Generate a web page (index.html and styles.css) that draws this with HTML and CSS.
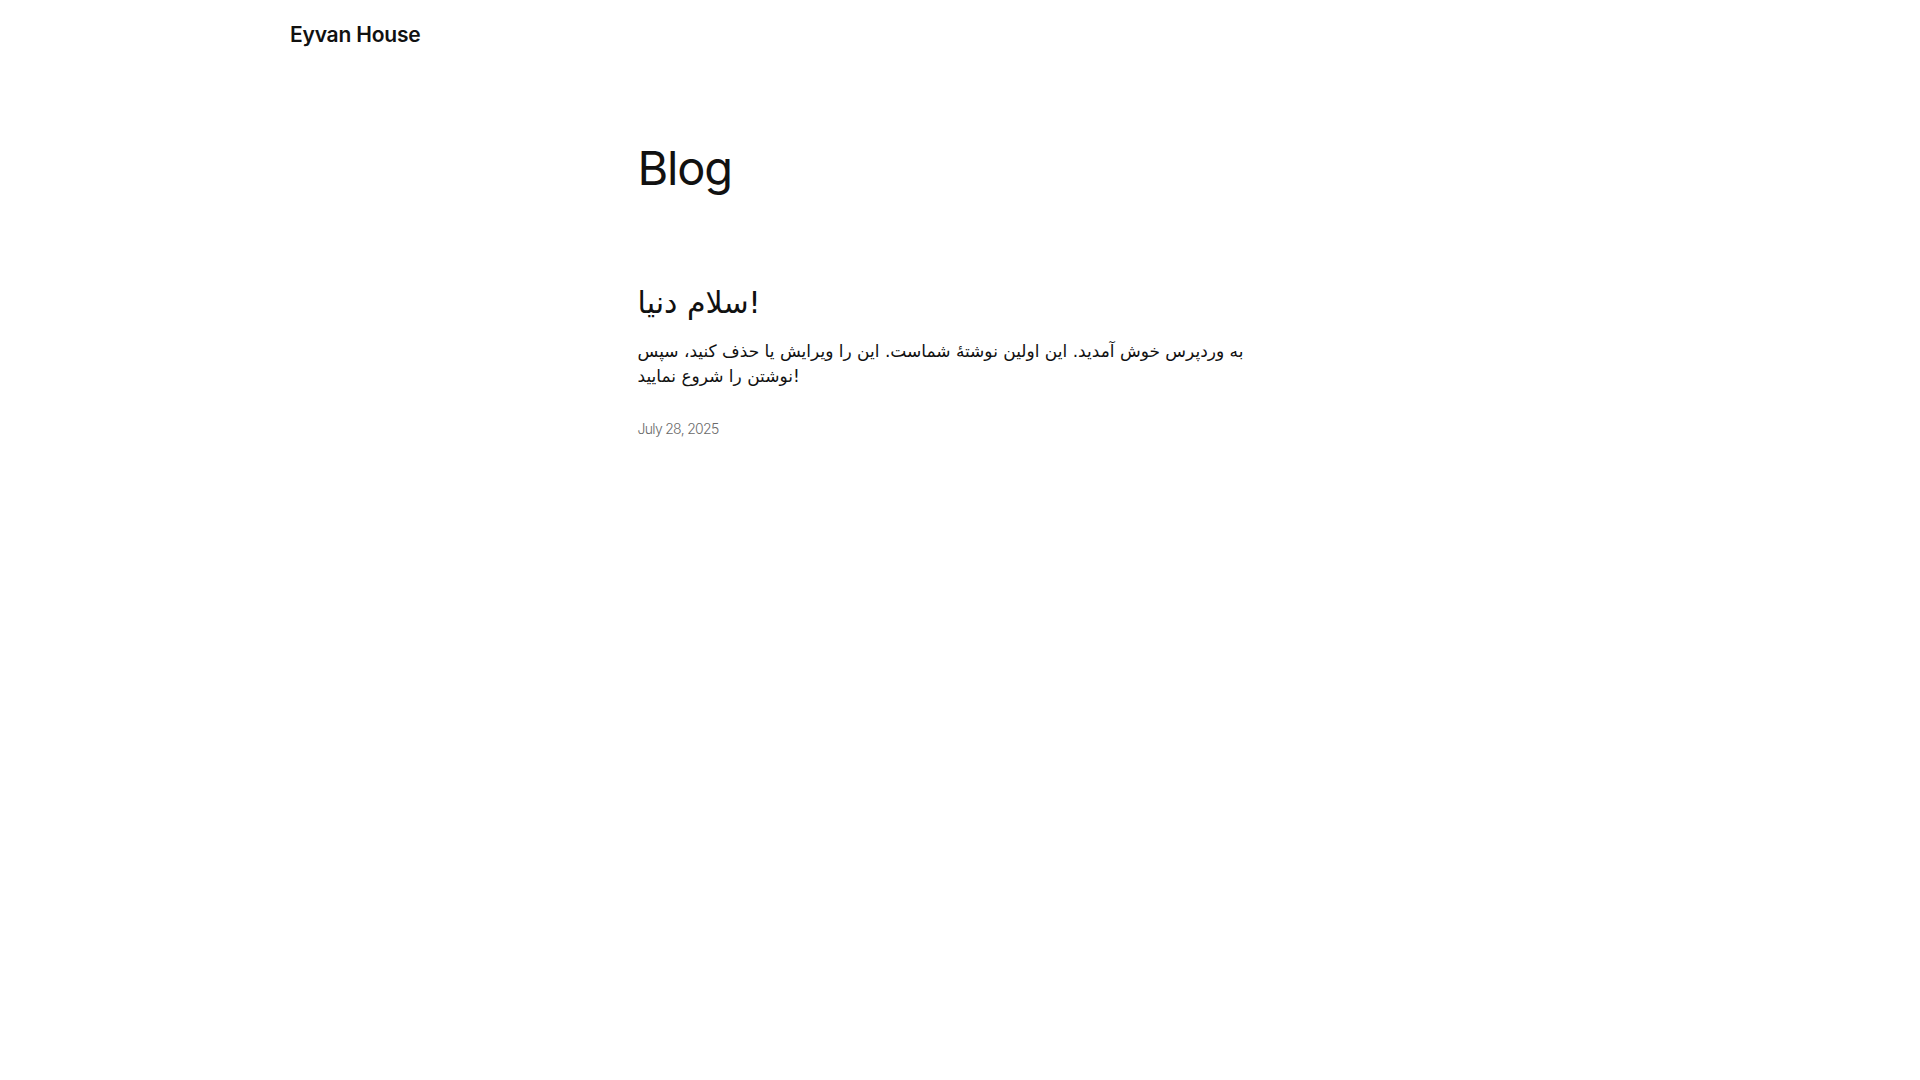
FILE: index.html
```html
<!DOCTYPE html>
<html lang="fa">
<head>
<meta charset="utf-8">
<title>Blog – Eyvan House</title>
<link rel="stylesheet" href="styles.css">
</head>
<body>
<header class="site-header">
  <div class="wide">
    <a class="site-title" href="#">Eyvan House</a>
  </div>
</header>
<main class="content">
  <h1 class="page-title">Blog</h1>
  <article class="post">
    <h2 class="post-title" dir="ltr">سلام دنیا!</h2>
    <p class="post-excerpt" dir="ltr">به وردپرس خوش آمدید. این اولین نوشتهٔ شماست. این را ویرایش یا حذف کنید، سپس نوشتن را شروع نمایید!</p>
    <div class="post-date">July 28, 2025</div>
  </article>
</main>
</body>
</html>
```

FILE: styles.css
```css
html, body {
  margin: 0;
  padding: 0;
  background: #ffffff;
  color: #111111;
  font-family: Inter, "DejaVu Sans", sans-serif;
}
.site-header {
  padding-top: 22px;
}
.wide {
  width: 1340px;
  margin: 0 auto;
}
.site-title {
  font-family: Inter, sans-serif;
  font-size: 21px;
  font-weight: 600;
  letter-spacing: -0.2px;
  color: #111111;
  text-decoration: none;
  line-height: 1.2;
}
.content {
  width: 645px;
  margin: 0 auto;
  padding-top: 93px;
}
.page-title {
  margin: 0;
  font-family: Inter, sans-serif;
  font-size: 47px;
  font-weight: 400;
  letter-spacing: -1.2px;
  line-height: 1.2;
}
.post {
  padding-top: 88px;
}
.post-title {
  margin: 0;
  font-family: "DejaVu Sans", sans-serif;
  font-size: 30px;
  font-weight: 400;
  line-height: 1.2;
}
.post-excerpt {
  margin: 18px 0 0;
  font-family: "DejaVu Sans", sans-serif;
  font-size: 17px;
  line-height: 25px;
  max-width: 620px;
}
.post-date {
  margin-top: 31px;
  font-family: Inter, sans-serif;
  font-size: 14px;
  font-weight: 300;
  letter-spacing: -0.7px;
  color: #6b6b6b;
}
```
